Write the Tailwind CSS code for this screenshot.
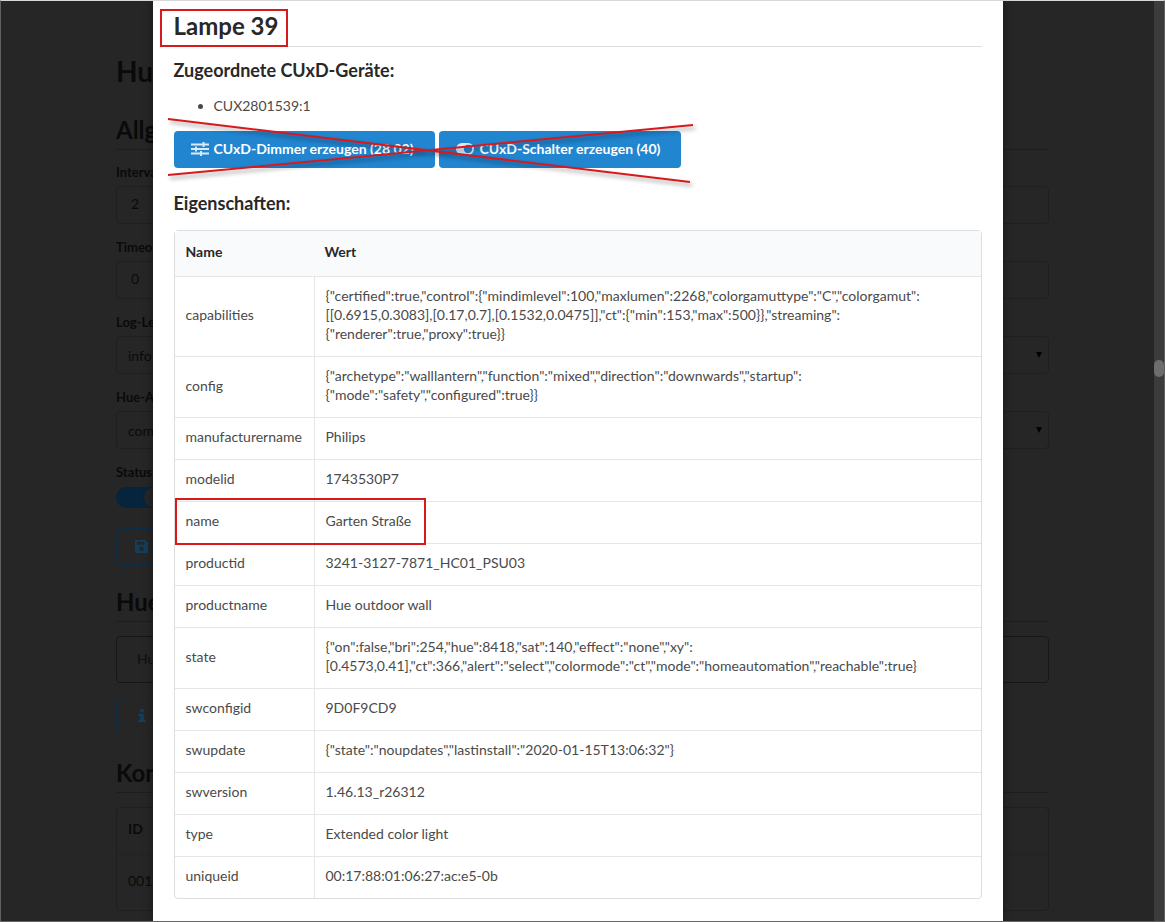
<!DOCTYPE html>
<html lang="de">
<head>
<meta charset="utf-8">
<title>Lampe 39</title>
<script src="https://cdn.jsdelivr.net/npm/@tailwindcss/browser@4"></script>
</head>
<body class="relative h-screen overflow-hidden border border-t-[#d6d8d8] border-l-[#606262] border-r-[#606262] border-b-[#666666] bg-[#262626] font-[Lato,sans-serif] text-sm leading-[19px] text-[#0a0a0a]">

<!-- Dimmed settings page -->
<main class="mx-auto max-w-[933px] pt-[52px]">
  <h1 class="text-[28px] leading-9 font-bold">Hue</h1>
  <h2 class="mt-6 border-b border-[#1e1e1e] pb-0.5 text-2xl leading-[34px] font-bold">Allgemein</h2>
  <form>
    <label for="interval" class="mt-[13px] block text-[13px] leading-[18px] font-bold">Intervall</label>
    <input id="interval" value="2" class="mt-[5px] block h-[38px] w-full rounded border border-[#1f1f1f] px-3.5 pb-[3px]">
    <label for="timeout" class="mt-3.5 block text-[13px] leading-[18px] font-bold">Timeout</label>
    <input id="timeout" value="0" class="mt-[5px] block h-[38px] w-full rounded border border-[#1f1f1f] px-3.5 pb-[3px]">
    <label for="loglevel" class="mt-3.5 block text-[13px] leading-[18px] font-bold">Log-Level</label>
    <div class="relative mt-[5px]">
      <select id="loglevel" class="block h-[38px] w-full appearance-none rounded border border-[#1f1f1f] px-[11px]"><option>info</option></select>
      <svg class="absolute top-4 right-[7px] size-1.5" viewBox="0 0 6 6" fill="#000"><path d="M0 0h6L3 6z"/></svg>
    </div>
    <label for="api" class="mt-3.5 block text-[13px] leading-[18px] font-bold">Hue-API</label>
    <div class="relative mt-[5px]">
      <select id="api" class="block h-[38px] w-full appearance-none rounded border border-[#1f1f1f] px-[11px]"><option>common</option></select>
      <svg class="absolute top-4 right-[7px] size-1.5" viewBox="0 0 6 6" fill="#000"><path d="M0 0h6L3 6z"/></svg>
    </div>
    <label for="status" class="mt-3.5 block text-[13px] leading-[18px] font-bold">Status</label>
    <div class="relative mt-1.5 h-[21px] w-[49px] rounded-full bg-[#06243b]">
      <input id="status" type="checkbox" checked class="absolute inset-0 size-full opacity-0">
      <span class="pointer-events-none absolute top-0 right-0 size-[21px] rounded-full bg-[#262626]"></span>
    </div>
    <button type="button" aria-label="Speichern" class="mt-5 flex h-[37px] w-40 items-center rounded border border-[#0a2c45] px-[18px]">
      <svg class="size-[13px]" viewBox="0 0 14 14" fill="#123f5e" fill-rule="evenodd"><path d="M1 0h10l3 3v10a1 1 0 0 1-1 1H1a1 1 0 0 1-1-1V1a1 1 0 0 1 1-1zM2 2v3h8V2zm5 5a2 2 0 1 0 0 5 2 2 0 0 0 0-5z"/></svg>
    </button>
  </form>
  <h2 class="mt-5 border-b border-[#1e1e1e] pb-0.5 text-2xl leading-[34px] font-bold">Hue</h2>
  <div class="mt-3.5 flex h-[47px] items-center rounded border border-[#171717] px-5 pb-[3px] text-[#101010]">Hue</div>
  <button type="button" aria-label="Info" class="mt-3.5 flex h-[37px] w-40 items-center rounded border border-[#0a2c45] px-[21px]">
    <svg class="h-[13px] w-2" viewBox="0 0 8 14" fill="#123f5e"><path d="M2 0h4v3.500H2zM0 5h6v6.500h2V14H0v-2.500h2v-4H0z"/></svg>
  </button>
  <h2 class="mt-[22px] border-b border-[#1e1e1e] pb-0.5 text-2xl leading-[34px] font-bold">Konfiguration</h2>
  <table class="mt-3.5 w-full border-separate border-spacing-0 rounded border border-[#1f1f1f] text-left">
    <tr><th class="px-[11px] pt-[11px] pb-4 font-bold">ID</th></tr>
    <tr><td class="border-t border-[#222222] px-[11px] pt-4 pb-5">001</td></tr>
  </table>
</main>

<!-- Page scrollbar -->
<div class="absolute inset-y-0 right-0 w-2.5 bg-[#3c3c3c]">
  <div class="absolute top-[359px] h-[17px] w-full rounded-full bg-[#6d6d6d]"></div>
</div>

<!-- Lamp dialog -->
<div class="absolute inset-y-0 left-0 right-2.5 flex justify-center">
  <section role="dialog" aria-labelledby="dialog-title" class="h-full w-[850px] overflow-hidden bg-white px-[21px] text-[#4a4a4a] shadow-[0_0_8px_2px_rgba(0,0,0,0.25)]">
    <header class="relative border-b border-[#dedede] pt-2 pb-[3px] text-[#282828]">
      <h2 id="dialog-title" class="text-2xl leading-[34px] font-bold">Lampe 39</h2>
      <div class="pointer-events-none absolute top-2 -left-3.5 h-[38px] w-32 border-2 border-[#d8191c]"></div>
    </header>
    <h3 class="mt-[11px] text-lg leading-6 font-bold text-[#282828]">Zugeordnete CUxD-Geräte:</h3>
    <ul class="mt-3.5 list-disc pl-10"><li>CUX2801539:1</li></ul>

    <div class="relative mt-4 flex gap-1">
      <button type="button" class="flex h-[37px] items-center rounded bg-[#2185d0] pr-[21px] pb-0.5 pl-[17px] font-bold text-white">
        <svg class="mr-[5px] h-3.5 w-[18px]" viewBox="0 0 18 14" fill="none" stroke="#d9eaf7" stroke-width="1.800"><path d="M0 2.500h18M0 7h18M0 11.500h18"/><path d="M12.500 0v5M5 4.500v5M10 9v5" stroke-width="2"/></svg>
        CUxD-Dimmer erzeugen (28 02)
      </button>
      <button type="button" class="flex h-[37px] items-center rounded bg-[#2185d0] pr-[21px] pb-0.5 pl-[17px] font-bold text-white">
        <svg class="mr-1.5 h-3 w-[18px]" viewBox="0 0 18 12" fill="#d9eaf7" fill-rule="evenodd"><path d="M6 0h6a6 6 0 0 1 0 12H6A6 6 0 0 1 6 0zm6 1.800a4.200 4.200 0 1 0 0 8.400 4.200 4.200 0 0 0 0-8.400z"/></svg>
        CUxD-Schalter erzeugen (40)
      </button>
      <!-- Strike-out lines over both buttons -->
      <svg class="pointer-events-none absolute -top-4 -left-2 h-[74px] w-[532px] drop-shadow-[2px_3px_2px_rgba(0,0,0,0.4)]" viewBox="0 0 532 74" fill="none" stroke="#d8191c" stroke-width="2"><path d="M2 4L524 67M2 60L527 10"/></svg>
    </div>

    <h3 class="mt-[23px] text-lg leading-6 font-bold text-[#282828]">Eigenschaften:</h3>
    <table class="mt-[15px] w-full border-separate border-spacing-0 rounded border border-[#dedede] text-left [&_td]:border-t [&_td]:border-[#e6e6e6] [&_td]:px-[11px] [&_td]:pt-[9px] [&_td]:pb-[13px] [&_td+td]:border-l">
      <thead>
        <tr class="bg-[#f9fafb] text-[#282828]"><th class="w-[139px] px-[11px] pt-[11px] pb-[15px] font-bold">Name</th><th class="px-[11px] pt-[11px] pb-[15px] font-bold">Wert</th></tr>
      </thead>
      <tbody>
        <tr><td>capabilities</td><td>{"certified":true,"control":{"mindimlevel":100,"maxlumen":2268,"colorgamuttype":"C","colorgamut":<br>[[0.6915,0.3083],[0.17,0.7],[0.1532,0.0475]],"ct":{"min":153,"max":500}},"streaming":<br>{"renderer":true,"proxy":true}}</td></tr>
        <tr><td>config</td><td>{"archetype":"walllantern","function":"mixed","direction":"downwards","startup":<br>{"mode":"safety","configured":true}}</td></tr>
        <tr><td>manufacturername</td><td>Philips</td></tr>
        <tr><td>modelid</td><td>1743530P7</td></tr>
        <tr><td class="relative">name<div class="pointer-events-none absolute -top-1 left-0 h-[47px] w-[251px] border-2 border-[#d8191c]"></div></td><td>Garten Straße</td></tr>
        <tr><td>productid</td><td>3241-3127-7871_HC01_PSU03</td></tr>
        <tr><td>productname</td><td>Hue outdoor wall</td></tr>
        <tr><td>state</td><td>{"on":false,"bri":254,"hue":8418,"sat":140,"effect":"none","xy":<br>[0.4573,0.41],"ct":366,"alert":"select","colormode":"ct","mode":"homeautomation","reachable":true}</td></tr>
        <tr><td>swconfigid</td><td>9D0F9CD9</td></tr>
        <tr><td>swupdate</td><td>{"state":"noupdates","lastinstall":"2020-01-15T13:06:32"}</td></tr>
        <tr><td>swversion</td><td>1.46.13_r26312</td></tr>
        <tr><td>type</td><td>Extended color light</td></tr>
        <tr><td>uniqueid</td><td>00:17:88:01:06:27:ac:e5-0b</td></tr>
      </tbody>
    </table>
  </section>
</div>
</body>
</html>
